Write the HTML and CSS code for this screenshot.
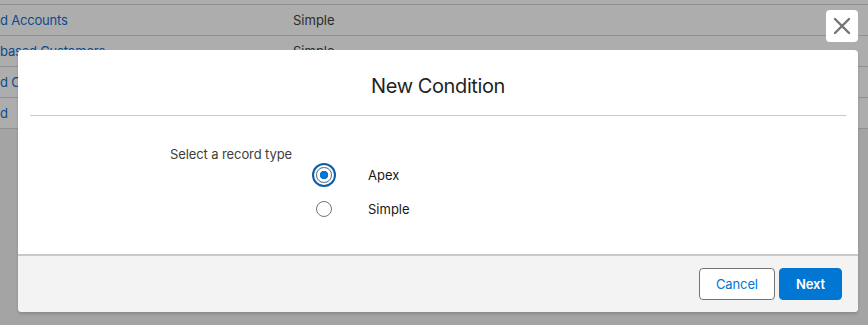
FILE: index.html
```html
<!DOCTYPE html>
<html lang="en">
<head>
    <meta charset="UTF-8">
    <meta name="viewport" content="width=device-width, initial-scale=1.0">
    <title>New Condition</title>
    <link rel="stylesheet" href="styles.css">
</head>
<body>

<div class="list">
    <div class="row"><a class="name" href="#">d Accounts</a><span class="type">Simple</span></div>
    <div class="row"><a class="name" href="#">based Customers</a><span class="type">Simple</span></div>
    <div class="row"><a class="name" href="#">d Contacts</a><span class="type">Simple</span></div>
    <div class="row"><a class="name" href="#">d</a><span class="type">Simple</span></div>
</div>

<button class="close" title="Close">
    <svg width="18" height="18" viewBox="0 0 18 18">
        <path d="M2 2 L16 16 M16 2 L2 16" stroke="#747474" stroke-width="2.4" stroke-linecap="round"/>
    </svg>
</button>

<div class="modal">
    <div class="modal-header">
        <h2>New Condition</h2>
    </div>
    <div class="modal-body">
        <div class="field-label">Select a record type</div>
        <div class="radio-list">
            <label class="radio">
                <span class="dot checked"></span>
                <span>Apex</span>
            </label>
            <label class="radio">
                <span class="dot"></span>
                <span>Simple</span>
            </label>
        </div>
    </div>
    <div class="modal-footer">
        <button class="btn">Cancel</button>
        <button class="btn btn-brand">Next</button>
    </div>
</div>

</body>
</html>
```

FILE: styles.css
```css
body {
    font-family: Inter, "Noto Sans", sans-serif;
    margin: 0;
    background-color: #a4a4a4;
    color: #181818;
    font-size: 13px;
}
.list {
    background: #adadad;
    padding-top: 4px;
}
.row {
    display: flex;
    align-items: center;
    height: 30px;
    border-top: 1px solid #919191;
}
.row:last-child {
    border-bottom: 1px solid #919191;
}
.name {
    width: 293px;
    color: #0b4b8c;
    text-decoration: none;
    letter-spacing: -0.2px;
}
.type {
    color: #2b2b2b;
}
.close {
    position: absolute;
    top: 10px;
    left: 826px;
    width: 32px;
    height: 32px;
    padding: 0;
    border: none;
    border-radius: 4px;
    background: white;
    display: flex;
    align-items: center;
    justify-content: center;
}
.modal {
    position: absolute;
    top: 50px;
    left: 18px;
    width: 840px;
    background: white;
    border-radius: 4px;
    box-shadow: 0 2px 3px rgba(0, 0, 0, 0.16);
}
.modal-header {
    margin: 0 12px;
    padding: 24px 0 16px;
    border-bottom: 1px solid #c9c9c9;
    text-align: center;
}
.modal-header h2 {
    margin: 0;
    font-size: 20px;
    font-weight: 400;
    line-height: 25px;
    letter-spacing: -0.4px;
    color: #1f1f1f;
}
.modal-body {
    padding: 29px 0 33px 152px;
}
.field-label {
    color: #3e3e3c;
    line-height: 18px;
    letter-spacing: -0.1px;
}
.radio-list {
    display: flex;
    flex-direction: column;
    gap: 10px;
    padding-left: 146px;
}
.radio {
    display: flex;
    align-items: center;
    gap: 36px;
    height: 24px;
}
.dot {
    box-sizing: border-box;
    width: 16px;
    height: 16px;
    border: 1px solid #747474;
    border-radius: 50%;
    background: white;
}
.dot.checked {
    background: radial-gradient(circle, #0176d3 0 4px, white 4.5px);
    box-shadow: 0 0 0 2px white, 0 0 0 4px #0b5cab;
}
.modal-footer {
    display: flex;
    justify-content: flex-end;
    gap: 4px;
    padding: 12px 16px;
    background: #f3f3f3;
    border-top: 2px solid #c9c9c9;
    border-radius: 0 0 4px 4px;
}
.btn {
    font-family: inherit;
    font-size: 13px;
    height: 32px;
    padding: 0 16px;
    border: 1px solid #747474;
    border-radius: 4px;
    background: white;
    color: #0176d3;
    letter-spacing: -0.1px;
}
.btn-brand {
    background: #0176d3;
    border-color: #0176d3;
    color: white;
    font-weight: 600;
}
```
